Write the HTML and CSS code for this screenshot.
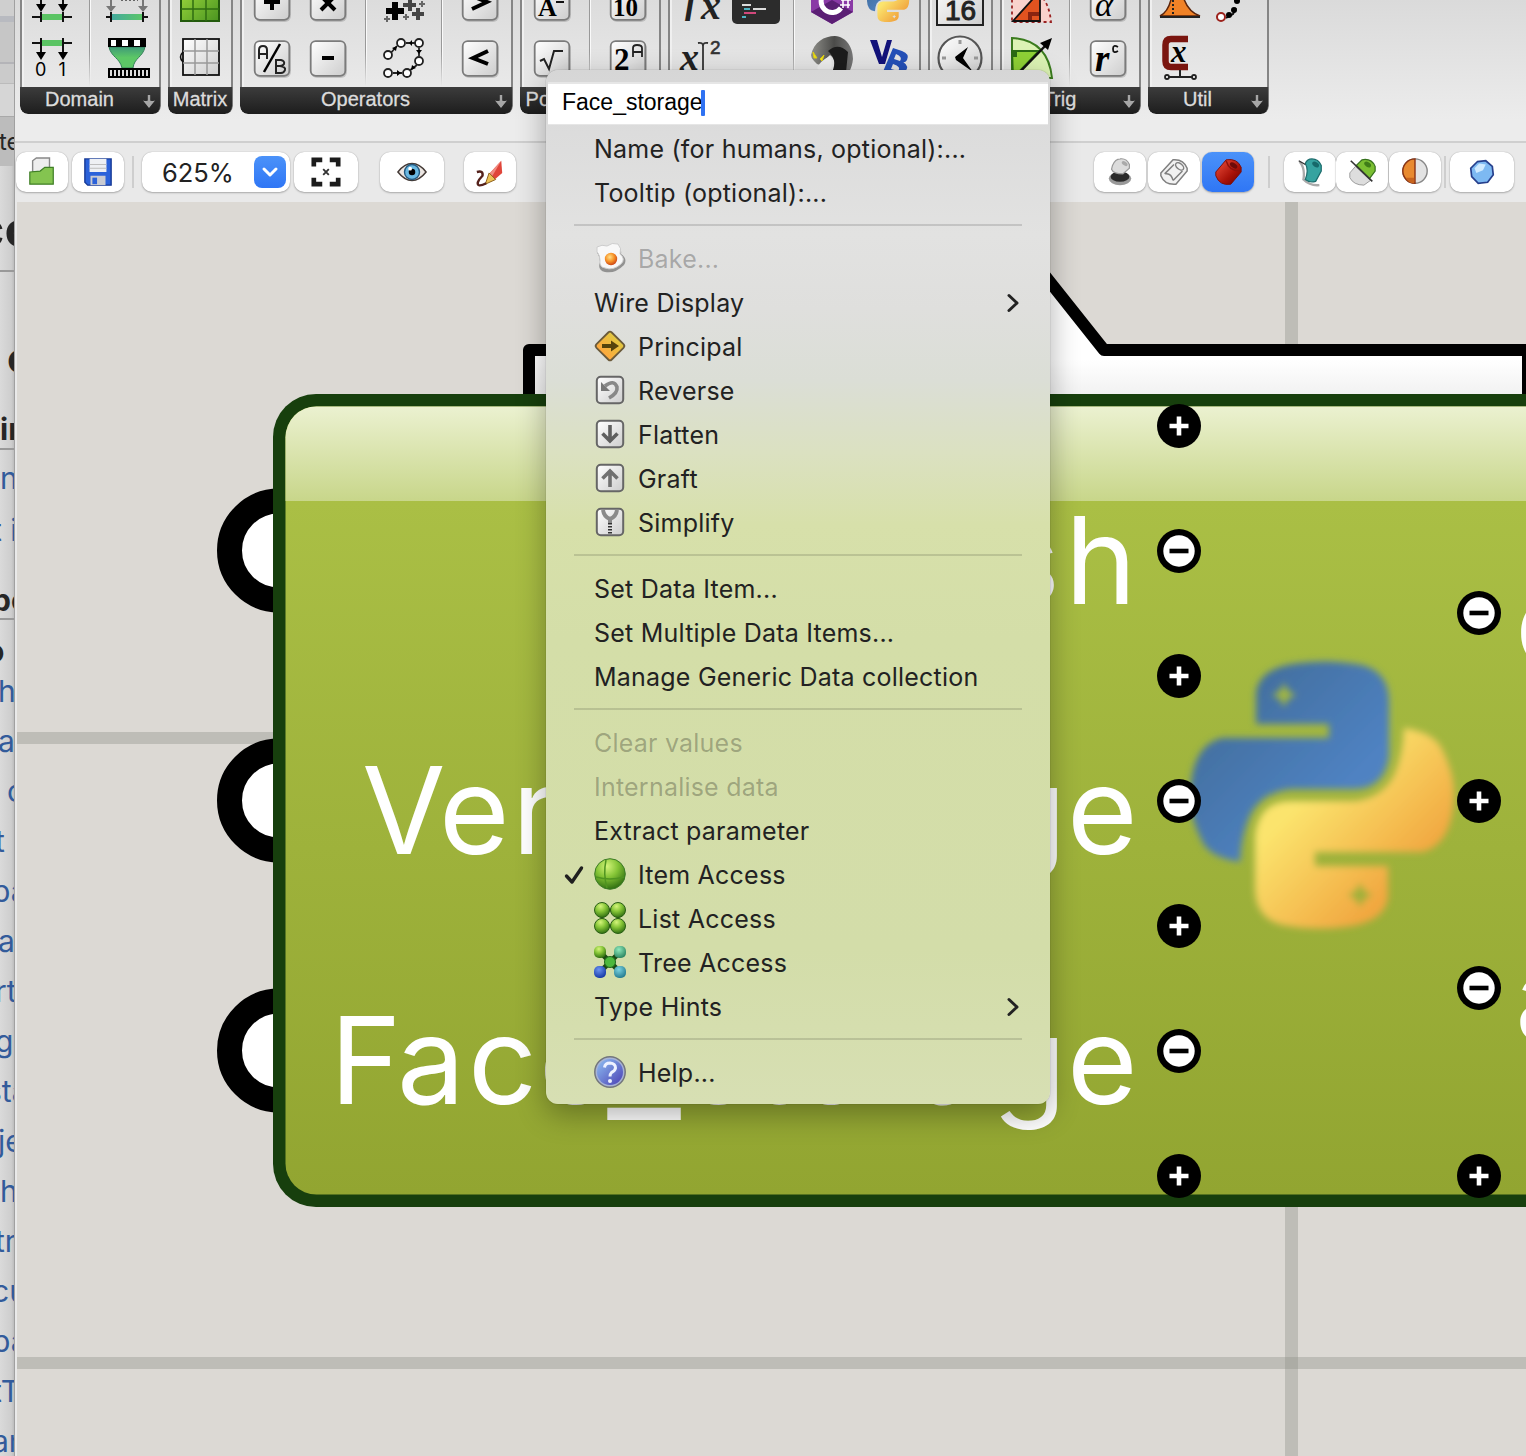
FILE: index.html
```html
<!DOCTYPE html>
<html lang="en">
<head>
<meta charset="utf-8">
<title>Grasshopper</title>
<link rel="stylesheet" href="styles.css">
</head>
<body>
<svg class="defs" width="0" height="0" aria-hidden="true">
  <defs>
    <linearGradient id="keyFill" x1="0" y1="0" x2="1" y2="1"><stop offset="0" stop-color="#fff"/><stop offset="1" stop-color="#cdcdcd"/></linearGradient>
    <linearGradient id="greenGrid" x1="0" y1="0" x2="1" y2="1"><stop offset="0" stop-color="#a5e040"/><stop offset="1" stop-color="#4a9420"/></linearGradient>
    <linearGradient id="tealGreen"><stop offset="0" stop-color="#43a9a0"/><stop offset="1" stop-color="#5cc766"/></linearGradient>
    <linearGradient id="funnel" x1="0" y1="0" x2="0" y2="1"><stop offset="0" stop-color="#3f9a78"/><stop offset=".5" stop-color="#5cc766"/></linearGradient>
    <linearGradient id="pyBlue" x1="0" y1="0" x2="1" y2="1"><stop offset=".2" stop-color="#426f9f"/><stop offset=".7" stop-color="#4f82c2"/></linearGradient>
    <linearGradient id="pyYellow" x1="1" y1="1" x2="0" y2="0"><stop offset=".3" stop-color="#fbe46d"/><stop offset=".75" stop-color="#f1a740"/></linearGradient>
    <radialGradient id="ballGreen" cx=".4" cy=".25" r=".8"><stop offset="0" stop-color="#d4f47a"/><stop offset=".45" stop-color="#84c436"/><stop offset="1" stop-color="#28660e"/></radialGradient>
    <radialGradient id="ballTeal" cx=".4" cy=".3" r=".8"><stop offset="0" stop-color="#8feabb"/><stop offset="1" stop-color="#217a58"/></radialGradient>
    <radialGradient id="ballCyan" cx=".4" cy=".3" r=".8"><stop offset="0" stop-color="#7bd3e0"/><stop offset="1" stop-color="#1c7288"/></radialGradient>
    <radialGradient id="ballBlue" cx=".4" cy=".3" r=".8"><stop offset="0" stop-color="#6b93f0"/><stop offset="1" stop-color="#0c2f9e"/></radialGradient>
    <radialGradient id="yolk" cx=".4" cy=".35" r=".7"><stop offset="0" stop-color="#ffe08a"/><stop offset=".5" stop-color="#f79429"/><stop offset="1" stop-color="#c83c12"/></radialGradient>
    <linearGradient id="sign" x1="0" y1="0" x2="0" y2="1"><stop offset="0" stop-color="#e0c740"/><stop offset="1" stop-color="#ffa73c"/></linearGradient>
    <linearGradient id="help" x1="0" y1="0" x2="1" y2="1"><stop offset="0" stop-color="#8fc0f2"/><stop offset="1" stop-color="#4a3fb4"/></linearGradient>
    <linearGradient id="redCyl" x1="0" y1="0" x2="1" y2="1"><stop offset="0" stop-color="#f0523f"/><stop offset=".6" stop-color="#a91208"/><stop offset="1" stop-color="#600"/></linearGradient>
    <linearGradient id="snake" x1="0" y1="0" x2="1" y2="0"><stop offset="0" stop-color="#8f8f8a"/><stop offset=".55" stop-color="#4b4b49"/><stop offset="1" stop-color="#777"/></linearGradient>
    <g id="key"><rect x="11" y="12" width="36" height="36" rx="6" fill="#000" opacity=".15"/><rect x="10.700" y="11.200" width="34.600" height="34.600" rx="5" fill="url(#keyFill)" stroke="#7b7b7b" stroke-width="1.800"/></g>
    <path id="python" d="M1300 663Q1330 659 1362 665Q1389 672 1389 702V755Q1385 788 1355 789H1290Q1262 792 1250 815Q1241 835 1240 862Q1212 858 1203 843Q1190 818 1190 797Q1191 745 1222 738H1329V724H1256V692Q1260 667 1300 663ZM1284 683L1280 691L1272 695L1280 699L1284 707L1288 699L1296 695L1288 691Z"/>
    <filter id="soften" x="-10%" y="-10%" width="120%" height="120%"><feGaussianBlur stdDeviation="3.600"/></filter>
    <g id="mkey"><rect x="2.800" y="2.800" width="26.400" height="26.400" rx="4" fill="url(#keyFill)" stroke="#666" stroke-width="2"/></g>
    <g id="down"><path d="M8 3V14" stroke="#a6a6a6" stroke-width="2.400"/><path d="M2 8.500Q8 10 8 7Q8 10 14 8.500L8 16Z" fill="#a6a6a6"/></g>
  </defs>
</svg>

<div class="desktop">
  <aside class="page-behind">
    <div class="tab-strip"><span class="tab">te</span></div>
    <div class="row title in-title">co</div>
    <div class="row heading in-8">o</div>
    <div class="row sub in-1">in</div>
    <div class="row link first in-1">n</div>
    <div class="row link second in-l8">t i</div>
    <div class="row sub third in-l7">po</div>
    <div class="row bold in-l11">o</div>
    <div class="row link in-l1">h</div>
    <div class="row link in-l1">a</div>
    <div class="row link in-8">c</div>
    <div class="row link in-l4">t</div>
    <div class="row link in-l7">pa</div>
    <div class="row link in-l1">a</div>
    <div class="row link in-l4">rt</div>
    <div class="row link in-l4">g</div>
    <div class="row link in-l14">sta</div>
    <div class="row link in-l1">je</div>
    <div class="row link in-1">h</div>
    <div class="row link in-l4">tr</div>
    <div class="row link in-l7">cu</div>
    <div class="row link in-l7">pa</div>
    <div class="row link in-l7">tT</div>
    <div class="row link in-l7">an</div>
  </aside>

  <main class="window">
    <header class="ribbon">
      <section class="group">
        <div class="cells">
          <div class="col">
            <svg class="ic" viewBox="0 0 56 56"><g stroke="#111" stroke-width="2"><rect x="17" y="40" width="22" height="6" fill="#5bc464" stroke="none"/><path d="M8 43H17M39 43H48M17 38V48M39 38V48M17 20V30M39 20V30"/></g><path d="M12 30H22L17 38ZM34 30H44L39 38Z"/></svg>
            <svg class="ic" viewBox="0 0 56 56"><g stroke="#111" stroke-width="2"><rect x="17" y="10" width="22" height="6" fill="#5bc464" stroke="none"/><path d="M8 13H17M39 13H48M17 8V24M39 8V24"/></g><path d="M12 22H22L17 30ZM34 22H44L39 30Z"/><text class="mono" x="11" y="46" font-size="18">0</text><text class="mono" x="34.500" y="46" font-size="18">1</text></svg>
          </div>
          <i class="rule"></i>
          <div class="col">
            <svg class="ic" viewBox="0 0 56 56"><rect x="11" y="40" width="32" height="6" fill="url(#tealGreen)"/><path d="M6 43H11M43 43H48M11 38V48M43 38V48" stroke="#111" stroke-width="2"/><path d="M6 32H16L11 38ZM38 32H48L43 38Z" fill="#777"/><path d="M11 20V32M43 20V32" stroke="#777" stroke-width="2"/><path d="M21 26H38" stroke="#666" stroke-width="2" stroke-dasharray="2 2"/></svg>
            <svg class="ic" viewBox="0 0 56 56"><path d="M9 17H45C43 27 34 28 33 38H22C20 28 11 27 9 17Z" fill="url(#funnel)" stroke="#35805a"/><path d="M8 8H46V17H8Z"/><path d="M11 10H16V16H11ZM22 10H28V16H22ZM34 10H40V16H34Z" fill="#fff"/><path d="M8 38H50V48H8Z"/><path d="M10 43H49" stroke="#ddd" stroke-width="6" stroke-dasharray="2 2"/></svg>
          </div>
        </div>
        <div class="bar"><span>Domain</span><svg class="arr" viewBox="0 0 16 18"><use href="#down"/></svg></div>
      </section>

      <section class="group">
        <div class="cells"><div class="col">
          <svg class="ic" viewBox="0 0 56 56"><rect x="9" y="9" width="38" height="38" fill="url(#greenGrid)" stroke="#235a0c" stroke-width="2"/><path d="M21 9V47M34 9V47M9 22H47M9 35H47" stroke="#2f6d12" stroke-width="1.500"/></svg>
          <svg class="ic" viewBox="0 0 56 56"><rect x="11" y="9" width="36" height="36" fill="url(#keyFill)" stroke="#111" stroke-width="1.800"/><path d="M23 9V45M35 9V45M11 21H47M11 33H47" stroke="#999" stroke-width="1.500"/><path d="M11 22Q6 27 11 32" fill="none" stroke="#111" stroke-width="1.500"/></svg>
        </div></div>
        <div class="bar plain"><span>Matrix</span></div>
      </section>

      <section class="group">
        <div class="cells">
          <div class="col">
            <svg class="ic" viewBox="0 0 56 56"><use href="#key"/><path d="M20 28H36M28 20V36" stroke="#000" stroke-width="4"/></svg>
            <svg class="ic" viewBox="0 0 56 56"><use href="#key"/><path d="M15 29V20Q15 16 19 16Q23 16 23 20V29M15 24H23M32 43V30H37Q41 31 40 34Q39 36 36 36Q42 37 41 40Q40 43 37 43ZM32 36H37" fill="none" stroke="#222" stroke-width="2"/><path d="M20 42L36 14" stroke="#000" stroke-width="2.500"/></svg>
          </div>
          <div class="col">
            <svg class="ic" viewBox="0 0 56 56"><use href="#key"/><path d="M21 22L35 36M35 22L21 36" stroke="#000" stroke-width="4"/></svg>
            <svg class="ic" viewBox="0 0 56 56"><use href="#key"/><path d="M22 28H34" stroke="#000" stroke-width="4"/></svg>
          </div>
          <i class="rule"></i>
          <div class="col">
            <svg class="ic" viewBox="0 0 56 56"><path d="M10 37H28M19 28V46" stroke="#000" stroke-width="6"/><path d="M27 31H40M34 24V37M36 40H48M42 34V46" stroke="#444" stroke-width="4"/><path d="M8 45H14M11 42V48M27 43H33M30 40V46M43 30H49M46 27V33" stroke="#666" stroke-width="2"/></svg>
            <svg class="ic" viewBox="0 0 56 56"><g fill="none" stroke="#222" stroke-width="1.800"><path d="M13 25L21 16M30 13H39M43 18V26M41 35L33 41M17 43H26"/><g fill="#fff"><circle cx="12" cy="25" r="4"/><circle cx="25" cy="13" r="4"/><circle cx="43" cy="13" r="4"/><circle cx="43" cy="31" r="4"/><circle cx="31" cy="43" r="4"/><circle cx="12" cy="43" r="4"/></g></g><path d="M16 18L21 16L20 21ZM33 13L36 10V16ZM43 24L40 20H46ZM35 40L36 35L40 38ZM25 43L21 40V46Z"/></svg>
          </div>
          <i class="rule"></i>
          <div class="col">
            <svg class="ic" viewBox="0 0 56 56"><use href="#key"/><path d="M20 22L35 28L20 35" fill="none" stroke="#000" stroke-width="4"/></svg>
            <svg class="ic" viewBox="0 0 56 56"><use href="#key"/><path d="M36 21L21 28L36 34" fill="none" stroke="#000" stroke-width="4"/></svg>
          </div>
        </div>
        <div class="bar"><span>Operators</span><svg class="arr" viewBox="0 0 16 18"><use href="#down"/></svg></div>
      </section>

      <section class="group">
        <div class="cells">
          <div class="col">
            <svg class="ic" viewBox="0 0 56 56"><use href="#key"/><text class="serif b" x="14" y="42" font-size="26">A</text><path d="M32 28H40" stroke="#111" stroke-width="2"/></svg>
            <svg class="ic" viewBox="0 0 56 56"><use href="#key"/><path d="M16 31L20 29L25 39L30 21H39" fill="none" stroke="#222" stroke-width="2"/></svg>
          </div>
          <i class="rule"></i>
          <div class="col">
            <svg class="ic" viewBox="0 0 56 56"><use href="#key"/><text class="serif b" x="13" y="42" font-size="25">10</text></svg>
            <svg class="ic" viewBox="0 0 56 56"><use href="#key"/><text class="serif b" x="14" y="40" font-size="31">2</text><path d="M33 27V18Q33 15 37 15Q42 15 42 18V27M33 22H42" fill="none" stroke="#222" stroke-width="1.800"/></svg>
          </div>
        </div>
        <div class="bar"><span>Polynomials</span><svg class="arr" viewBox="0 0 16 18"><use href="#down"/></svg></div>
      </section>

      <section class="group">
        <div class="cells">
          <div class="col">
            <svg class="ic" viewBox="0 0 56 56"><text class="serif i b" x="13" y="39" font-size="36" fill="#222">f</text><text class="serif i b" x="29" y="45" font-size="40" fill="#222">x</text></svg>
            <svg class="ic" viewBox="0 0 56 56"><text class="serif i b" x="8" y="40" font-size="38" fill="#222">x</text><text class="sans" x="38" y="24" font-size="19" fill="#333" stroke="#333" stroke-width=".6">2</text><path d="M26 13Q31 12 31 16Q31 12 36 13M31 15V44" fill="none" stroke="#333" stroke-width="1.800"/></svg>
          </div>
          <div class="col">
            <svg class="ic" viewBox="0 0 56 56"><rect x="4" y="4" width="48" height="46" rx="5" fill="#2c2c2c"/><path d="M14 31H23M25 35H38" stroke="#ddd" stroke-width="2"/><path d="M16 35H22M14 43H18" stroke="#4fb4c4" stroke-width="2"/><path d="M16 39H28" stroke="#d2487c" stroke-width="2"/></svg>
            <svg class="ic" viewBox="0 0 56 56"></svg>
          </div>
          <i class="rule"></i>
          <div class="col">
            <svg class="ic" viewBox="0 0 56 56"><path d="M28 2L49 14V38L28 50L7 38V14Z" fill="#8a3aa6"/><path d="M28 26L49 38L28 50L7 38Z" fill="#5b1f74"/><path d="M37 34A11 11 0 1 1 37 21" fill="none" stroke="#fff" stroke-width="5"/><path d="M39 22V34M44 22V34M37 26H47M36 31H46" stroke="#fff" stroke-width="1.600"/></svg>
            <svg class="ic" viewBox="0 0 56 56"><path d="M7 25C10 12 20 6 31 6C43 7 49 18 49 29C48 39 44 44 42 46L26 44C34 39 32 29 26 25C22 29 19 31 16 35Q12 34 10 31Q7 28 7 25Z" fill="url(#snake)"/><path d="M24 21Q34 12 44 22L42 42H28Q34 30 24 21Z" fill="#1c1c1c"/><path d="M13 38Q16 31 26 26Q30 35 25 42H16Z" fill="#eee"/><path d="M9 22L13 28H10ZM16 29L20 25L18 31Z" fill="#f3e51c" stroke="#e0d010"/></svg>
          </div>
          <div class="col">
            <svg class="ic" viewBox="0 0 56 56"><g transform="translate(7 5) scale(.16) translate(-1190 -660)"><use href="#python" fill="url(#pyBlue)"/><use href="#python" fill="url(#pyYellow)" transform="rotate(180 1322 795)"/></g></svg>
            <svg class="ic" viewBox="0 0 56 56"><path d="M10 10H17L22 27L27 10H32L25 34H19Z" fill="#12127a"/><path d="M33 18L42 21Q50 24 47 30Q45 33 43 32Q50 36 45 42Q40 48 22 44ZM36 24L34 29L40 31Q43 27 36 24ZM33 34L31 39L38 41Q42 37 33 34Z" fill="#2450b8" fill-rule="evenodd"/></svg>
          </div>
        </div>
        <div class="bar"><span>Script</span><svg class="arr" viewBox="0 0 16 18"><use href="#down"/></svg></div>
      </section>

      <section class="group">
        <div class="cells"><div class="col">
          <svg class="ic" viewBox="0 0 56 56"><rect x="5" y="6" width="46" height="45" fill="url(#keyFill)" stroke="#222" stroke-width="2"/><text class="sans" x="13" y="46" font-size="28" fill="#222" stroke="#222">16</text></svg>
          <svg class="ic" viewBox="0 0 56 56"><circle cx="28" cy="28" r="21.500" fill="url(#keyFill)" stroke="#555" stroke-width="2.200"/><path d="M28 10V14M10 28H14M42 28H46" stroke="#999" stroke-width="3"/><path d="M36 17L31 28L41 42L24 30L23 27Z"/></svg>
        </div></div>
        <div class="bar plain"><span>Time</span></div>
      </section>

      <section class="group">
        <div class="cells">
          <div class="col">
            <svg class="ic" viewBox="0 0 56 56"><path d="M8 8Q44 12 47 48H8Z" fill="#f9d2cc" stroke="#922" stroke-width="1.800" stroke-dasharray="3 3"/><path d="M9 47L36 17V47Z" fill="#e2531f" stroke="#111" stroke-width="1.800"/><path d="M26 46V40H35" fill="none" stroke="#8a2410" stroke-width="4"/></svg>
            <svg class="ic" viewBox="0 0 56 56"><path d="M8 8Q44 10 48 48H8Z" fill="#dcf3b4" stroke="#3b7c1e" stroke-width="2"/><path d="M8 21H35L9 48Z" fill="#8fd136" stroke="#2b6a14" stroke-width="2"/><path d="M8 21H13V27H8Z" fill="#2b6a14"/><path d="M12 46L43 14" stroke="#111" stroke-width="2.500"/><path d="M48 8L36 13L44 20Z"/></svg>
          </div>
          <i class="rule"></i>
          <div class="col">
            <svg class="ic" viewBox="0 0 56 56"><use href="#key"/><text class="serif i" x="15" y="42" font-size="34">α</text></svg>
            <svg class="ic" viewBox="0 0 56 56"><use href="#key"/><text class="serif i b" x="15" y="41" font-size="37">r</text><path d="M38 17Q33 14 33 19Q33 24 38 21" fill="none" stroke="#111" stroke-width="1.800"/></svg>
          </div>
        </div>
        <div class="bar"><span>Trig</span><svg class="arr" viewBox="0 0 16 18"><use href="#down"/></svg></div>
      </section>

      <section class="group">
        <div class="cells">
          <div class="col">
            <svg class="ic" viewBox="0 0 56 56"><path d="M8 42Q20 36 21 10H29Q31 36 48 42Z" fill="#f08227" stroke="#5b250c" stroke-width="1.500"/><path d="M21 18V42" stroke="#222" stroke-width="2" stroke-dasharray="2 2"/><path d="M8 43H48" stroke="#222" stroke-width="2"/></svg>
            <svg class="ic" viewBox="0 0 56 56"><path d="M36 9H19Q13.500 9 13.500 15V31Q13.500 37 19 37H36" fill="none" stroke="#7a150f" stroke-width="6.500"/><text class="serif i b" x="19" y="32" font-size="31">x</text><path d="M28 40V47M16 47H42" stroke="#222" stroke-width="2"/><g fill="#fff" stroke="#222" stroke-width="1.800"><circle cx="15" cy="47" r="2"/><circle cx="42" cy="47" r="2"/></g></svg>
          </div>
          <div class="col">
            <svg class="ic" viewBox="0 0 56 56"><path d="M31 18L29 27M28 34L25 40L18 44" fill="none" stroke="#111" stroke-width="2"/><circle cx="29" cy="27" r="3"/><circle cx="26" cy="36" r="3"/><circle cx="21" cy="41" r="3"/><circle cx="13" cy="43" r="4" fill="#fff" stroke="#9c221c" stroke-width="2"/></svg>
            <svg class="ic" viewBox="0 0 56 56"></svg>
          </div>
        </div>
        <div class="bar"><span>Util</span><svg class="arr" viewBox="0 0 16 18"><use href="#down"/></svg></div>
      </section>
    </header>

    <nav class="toolbar">
      <button class="tb"><svg viewBox="0 0 32 32"><path d="M6 14V4L10 1H24V16H6Z" fill="#eee" stroke="#888" stroke-width="1.500"/><path d="M3 16L14 15L19 11H28V29H3Z" fill="#84c450" stroke="#3f7f26" stroke-width="1.300"/></svg></button>
      <button class="tb"><svg viewBox="0 0 32 32"><path d="M2 2H30V30H5L2 27Z" fill="#2b62da" stroke="#173a96" stroke-width="1.500"/><path d="M7 2H25V16H7Z" fill="#eef0f4"/><path d="M7 8H25M7 12H25" stroke="#bbb"/><path d="M8 20H24V30H8Z" fill="#c9cbd2"/><path d="M10 22H15V29H10Z" fill="#2b62da"/></svg></button>
      <i class="sep s1"></i>
      <div class="combo"><span>625%</span><b><svg viewBox="0 0 32 32"><path d="M10 13L16 19L22 13" fill="none" stroke="#fff" stroke-width="3" stroke-linecap="round" stroke-linejoin="round"/></svg></b></div>
      <button class="tb wide"><svg viewBox="0 0 32 32"><g fill="none" stroke="#1c1c1c" stroke-width="5"><path d="M3 10V3H12M20 3H29V10M29 22V29H20M12 29H3V22"/></g><path d="M13 13L19 19M19 13L13 19" stroke="#333" stroke-width="2"/></svg></button>
      <button class="tb wide eye"><svg viewBox="0 0 32 32"><path d="M1 16Q8 7 16 7Q24 7 31 16Q24 25 16 25Q8 25 1 16Z" fill="#ece6e2" stroke="#443a36" stroke-width="1.600"/><circle cx="16" cy="16" r="8" fill="#69b8e2" stroke="#255a80" stroke-width="1.500"/><circle cx="16" cy="16" r="3.500"/><circle cx="14" cy="12.500" r="2" fill="#fff"/></svg></button>
      <button class="tb pen"><svg viewBox="0 0 32 32"><path d="M28 4L29 17L21 24L15 18Z" fill="#e0453a"/><path d="M28 4L15 18L18 21Z" fill="#f08a80"/><path d="M15 17L22 24L11 29Z" fill="#ecc257" stroke="#8a5a14"/><path d="M12 28Q2 33 3 27Q4 24 8 20Q9 14 2 16" fill="none" stroke="#55221c" stroke-width="2.600"/></svg></button>
      <div class="tb-right">
        <button class="tb"><svg viewBox="0 0 32 32"><ellipse cx="16" cy="23" rx="12" ry="7" fill="#999"/><ellipse cx="16" cy="21" rx="10" ry="5.500" fill="#2b2b2b"/><path d="M8 9Q11 2 16 2Q23 1 26 8V12L19 18Q9 18 7 13Z" fill="#dcdcdc" stroke="#999" stroke-width="1.300"/><ellipse cx="21" cy="7" rx="3.500" ry="2" fill="#aaa" transform="rotate(35 21 7)"/></svg></button>
        <button class="tb"><svg viewBox="0 0 32 32"><g fill="none" stroke="#808080" stroke-width="1.600"><path d="M2 17L15 3Q26 2 30 12V15L18 29Q6 30 2 20Z" fill="#f2f2f2"/><ellipse cx="22" cy="10" rx="5" ry="3" transform="rotate(40 22 10)"/><path d="M6 18L16 8M15 25L25 15M7 18Q13 17 15 25"/></g></svg></button>
        <button class="tb on"><svg viewBox="0 0 32 32"><path d="M3 16L14 3Q26 1 30 11V16L19 29Q7 31 3 20Z" fill="url(#redCyl)" stroke="#7a0c08"/><path d="M14 4Q17 15 29 15" fill="none" stroke="#8d120b" stroke-width="1.500"/><ellipse cx="22" cy="9" rx="4.500" ry="2.500" fill="#6d0b08" transform="rotate(35 22 9)"/></svg></button>
        <i class="sep s2"></i>
        <button class="tb"><svg viewBox="0 0 32 32"><path d="M5 5Q11 12 9 24Q16 31 26 30" fill="none" stroke="#aaa" stroke-width="2.500"/><path d="M11 7Q13 2 18 2Q25 2 28 9V15L22 26Q16 28 11 24Q15 14 11 7Z" fill="#36a3a0" stroke="#1c6c6c" stroke-width="1.300"/><path d="M4 4L11 8" stroke="#333" stroke-width="1.500"/><ellipse cx="22" cy="8" rx="4" ry="2.500" fill="#17696a" transform="rotate(35 22 8)"/></svg></button>
        <button class="tb"><svg viewBox="0 0 32 32"><path d="M3 17L9 10L25 25L18 30Q7 30 3 22Z" fill="#ddd" stroke="#999"/><path d="M10 9L16 3Q26 1 30 10V15L24 23Z" fill="#7bbf32" stroke="#35701c" stroke-width="1.300"/><path d="M4 4L27 26" stroke="#333" stroke-width="1.700"/><ellipse cx="22" cy="8" rx="4" ry="2.500" fill="#3f7d18" transform="rotate(35 22 8)"/></svg></button>
        <button class="tb"><svg viewBox="0 0 32 32"><circle cx="16" cy="15" r="13" fill="#e3e3e3" stroke="#888" stroke-width="1.500"/><path d="M16 2A13 13 0 0 0 16 28Z" fill="#e88a30" stroke="#8b3414" stroke-width="1.500"/><path d="M6 22Q9 28 15 28V22Z" fill="#c8641e"/></svg></button>
        <i class="sep s3"></i>
        <button class="tb wide"><svg viewBox="0 0 32 32"><path d="M11 5L20 4L27 10L28 19L22 27L12 28L5 21L4 12Z" fill="#7db9f2" stroke="#263f8c" stroke-width="1.800"/><path d="M8 12L13 7L20 8L17 14L10 17Z" fill="#cfeaff"/></svg></button>
      </div>
    </nav>

    <svg class="canvas" viewBox="17 202 1509 1254">
      <defs>
        <linearGradient id="body" gradientUnits="userSpaceOnUse" x1="0" y1="501" x2="0" y2="1195"><stop offset="0" stop-color="#aabf45"/><stop offset="1" stop-color="#92a531"/></linearGradient>
        <linearGradient id="gloss" gradientUnits="userSpaceOnUse" x1="0" y1="407" x2="0" y2="501"><stop offset="0" stop-color="#ebf1d0"/><stop offset="1" stop-color="#c8d68a"/></linearGradient>
        <linearGradient id="tag" gradientUnits="userSpaceOnUse" x1="0" y1="280" x2="0" y2="394"><stop offset="0" stop-color="#fff"/><stop offset=".7" stop-color="#fff"/><stop offset="1" stop-color="#f2f2f2"/></linearGradient>
        <clipPath id="inner"><rect x="285.500" y="406.500" width="1400" height="788" rx="31"/></clipPath>
        <g id="plus"><circle r="22"/><path d="M-9.500 0H9.500M0 -9.500V9.500" stroke="#fff" stroke-width="4.600"/></g>
        <g id="minus"><circle r="22"/><circle r="15.700" fill="#fff"/><path d="M-9.500 0H9.500" stroke="#000" stroke-width="4.600"/></g>
      </defs>
      <g fill="#8f9088" fill-opacity=".38"><path d="M1285 202H1298V1456H1285Z"/><path d="M17 732H1526V744H17Z"/><path d="M17 1357H1526V1369H17Z"/></g>
      <path d="M529 440V350H780V160H953L1104 350H1528V440Z" fill="url(#tag)" stroke="#000" stroke-width="12" stroke-linejoin="round"/>
      <g fill="#fff" stroke="#000" stroke-width="25"><circle cx="279" cy="550.500" r="49.500"/><circle cx="279" cy="800.500" r="49.500"/><circle cx="279" cy="1050.500" r="49.500"/></g>
      <rect x="273" y="394" width="1400" height="813" rx="43" fill="#173f0d"/>
      <g clip-path="url(#inner)"><path d="M280 400H1526V1200H280Z" fill="url(#body)"/><path d="M280 400H1526V501H280Z" fill="url(#gloss)"/></g>
      <g class="port">
        <text y="604" x="810 928 996 1065">Mesh</text>
        <text y="854" x="362 439 512 560 607 687 750 795 870 915 992 1067">Vert_storage</text>
        <text y="1104" x="330 397 468 539">Face<tspan x="607" dy="4" class="under">_</tspan><tspan dy="-4" x="687 750 795 870 915 992 1067">storage</tspan></text>
        <text x="1515" y="666">out</text>
        <text x="1515" y="1041">a</text>
      </g>
      <g filter="url(#soften)"><use href="#python" fill="url(#pyBlue)" fill-rule="evenodd"/><use href="#python" fill="url(#pyYellow)" fill-rule="evenodd" transform="rotate(180 1322 795)"/></g>
      <use href="#plus" x="1179" y="426"/><use href="#minus" x="1179" y="551"/><use href="#plus" x="1179" y="676"/><use href="#minus" x="1179" y="801"/><use href="#plus" x="1179" y="926"/><use href="#minus" x="1179" y="1051"/><use href="#plus" x="1179" y="1176"/>
      <use href="#minus" x="1479" y="613"/><use href="#plus" x="1479" y="801"/><use href="#minus" x="1479" y="988"/><use href="#plus" x="1479" y="1176"/>
    </svg>
  </main>
</div>

<div class="menu">
  <div class="field"><span>Face_storage</span><i class="caret"></i></div>
  <div class="item">Name (for humans, optional):...</div>
  <div class="item">Tooltip (optional):...</div>
  <hr>
  <div class="item off"><svg viewBox="0 0 32 32"><path d="M4 6Q8 3 13 5Q18 1 24 3Q28 7 27 12Q34 17 30 23Q21 32 11 30Q3 28 6 20Q6 14 3 11Z" fill="#777" opacity=".75"/><path d="M3 5Q8 2 13 4Q18 0 24 2Q28 6 26 12Q32 17 27 22Q19 29 11 26Q5 25 6 18Q6 13 3 10Z" fill="#f8f8f8" stroke="#ccc"/><circle cx="17" cy="17" r="6.200" fill="url(#yolk)"/></svg>Bake...</div>
  <div class="item">Wire Display<svg class="more" viewBox="0 0 14 20"><path d="M3 2.500L11 10L3 17.500"/></svg></div>
  <div class="item"><svg viewBox="0 0 32 32"><rect x="5.200" y="5.200" width="21.600" height="21.600" rx="2.500" transform="rotate(45 16 16)" fill="url(#sign)" stroke="#6b5a3a" stroke-width="1.800"/><path d="M8 14H17V10.500L25 16L17 21.500V18H8Z" fill="#54430c"/></svg>Principal</div>
  <div class="item"><svg viewBox="0 0 32 32"><use href="#mkey"/><path d="M11 12Q20 5 23 13Q24 19 15 24" fill="none" stroke="#888" stroke-width="3.600"/><path d="M7 8V17H16Z" fill="#777"/></svg>Reverse</div>
  <div class="item"><svg viewBox="0 0 32 32"><use href="#mkey"/><path d="M16 7V22M8.500 15.500L16 23L23.500 15.500" fill="none" stroke="#5e5e5e" stroke-width="3.600"/></svg>Flatten</div>
  <div class="item"><svg viewBox="0 0 32 32"><use href="#mkey"/><path d="M16 25V9M8.500 16.500L16 9L23.500 16.500" fill="none" stroke="#707070" stroke-width="3.600"/></svg>Graft</div>
  <div class="item"><svg viewBox="0 0 32 32"><use href="#mkey"/><path d="M9 4Q10 11 16 13Q22 11 23 4M16 12V17" fill="none" stroke="#8a8a8a" stroke-width="4"/><path d="M16 17V29" stroke="#333" stroke-width="4" stroke-dasharray="1.500 1.500"/></svg>Simplify</div>
  <hr>
  <div class="item">Set Data Item...</div>
  <div class="item">Set Multiple Data Items...</div>
  <div class="item">Manage Generic Data collection</div>
  <hr>
  <div class="item off">Clear values</div>
  <div class="item off">Internalise data</div>
  <div class="item">Extract parameter</div>
  <div class="item checked"><svg class="check" viewBox="0 0 22 20"><path d="M3.500 11L9 17L18.500 3"/></svg><svg viewBox="0 0 32 32"><circle cx="16" cy="16" r="15.300" fill="url(#ballGreen)" stroke="#3b7a26"/><path d="M12 2Q9 16 13 30M2 19Q16 23 30 19" fill="none" stroke="#4f9420" stroke-width="1.500"/></svg>Item Access</div>
  <div class="item"><svg viewBox="0 0 32 32"><path d="M8 8H24V24H8Z" fill="none" stroke="#1f4d0c" stroke-width="3"/><g fill="url(#ballGreen)" stroke="#2a5f16"><circle cx="8" cy="8" r="7.500"/><circle cx="24" cy="8" r="7.500"/><circle cx="8" cy="24" r="7.500"/><circle cx="24" cy="24" r="7.500"/></g></svg>List Access</div>
  <div class="item"><svg viewBox="0 0 32 32"><path d="M6 6L26 26M26 6L6 26" stroke="#1c4a12" stroke-width="5"/><rect width="12" height="12" rx="5" fill="url(#ballGreen)"/><rect x="20" width="12" height="12" rx="5" fill="url(#ballTeal)"/><rect y="20" width="12" height="12" rx="5" fill="url(#ballBlue)"/><rect x="20" y="20" width="12" height="12" rx="5" fill="url(#ballCyan)"/><circle cx="16" cy="16" r="5.500" fill="#4db83c" stroke="#1f6a1c"/></svg>Tree Access</div>
  <div class="item">Type Hints<svg class="more" viewBox="0 0 14 20"><path d="M3 2.500L11 10L3 17.500"/></svg></div>
  <hr>
  <div class="item"><svg viewBox="0 0 32 32"><circle cx="16" cy="16" r="15.200" fill="#a7b3d6" stroke="#73767c" stroke-width="1.500"/><circle cx="16" cy="16" r="13" fill="url(#help)"/><path d="M10.500 11.500Q11 7 16 7Q21.500 7.500 21.500 12Q21 15 17.500 16.500Q16 18 16 20.500" fill="none" stroke="#eef2ff" stroke-width="3"/><circle cx="16" cy="25" r="2" fill="#eef2ff"/></svg>Help...</div>
</div>
</body>
</html>
```
FILE: styles.css
```css
* { box-sizing: border-box; }
body {
  margin: 0;
  width: 1526px;
  height: 1456px;
  overflow: hidden;
  position: relative;
  font-family: Inter, "Liberation Sans", sans-serif;
}
.defs { position: absolute; }
.desktop { display: flex; height: 1456px; }

/* Browser page peeking out from behind the window */
.page-behind {
  width: 14px;
  flex: none;
  overflow: hidden;
  white-space: nowrap;
  color: #262626;
  font-size: 30px;
  background: linear-gradient(90deg, #dadada, #cecece 80%, #bdbdbd);
}
.tab-strip {
  height: 166px;
  padding-top: 117px;
  font-size: 24px;
  background: linear-gradient(#cfcfcf 0 16px, #b8bac0 16px 22px, #c6c6c6 22px 62px, #b4b4b8 62px 64px, #cbcbcb 64px 83px, #bbb 83px 84px, #d6d6d6 84px 116px, #a9a9a9 116px 117px, #bcbcbc 117px);
}
.tab { display: block; line-height: 50px; margin-left: -1px; }
.row { height: 50px; line-height: 50px; }
.title { height: 106px; line-height: 126px; font-size: 50px; font-weight: 700; border-bottom: 2px solid #999; }
.heading { height: 132px; line-height: 172px; font-size: 42px; font-weight: 700; }
.sub { height: 46px; line-height: 50px; font-weight: 700; border-bottom: 2px solid #999; }
.link { color: #325b9b; }
.first { height: 53px; line-height: 56px; }
.second { height: 67px; line-height: 54px; }
.third { height: 50px; line-height: 60px; }
.bold { height: 46px; line-height: 62px; font-weight: 700; }
.in-8 { text-indent: 7px; }
.in-1 { text-indent: 0; }
.in-l1 { text-indent: -2px; }
.in-l4 { text-indent: -5px; }
.in-l7 { text-indent: -8px; }
.in-l8 { text-indent: -8px; }
.in-l11 { text-indent: -14px; }
.in-l14 { text-indent: -14px; }
.in-title { text-indent: -25px; }

.window {
  flex: 1;
  display: flex;
  flex-direction: column;
  min-width: 0;
  background: #e9e9e9;
  border-left: 1px solid #a0a0a0;
}

/* Component ribbon */
.ribbon {
  height: 143px;
  padding-left: 5px;
  display: flex;
  gap: 7px;
  align-items: flex-start;
  border-bottom: 2px solid #cfcfcf;
  background: linear-gradient(#dadada, #ececec 85%);
  overflow: hidden;
}
.group {
  height: 114px;
  flex: none;
  border-radius: 0 0 8px 8px;
  overflow: hidden;
}
.cells {
  height: 87px;
  padding: 0 3px 1px 2px;
  border: 2px solid #858585;
  border-width: 0 2px;
  display: flex;
  align-items: flex-end;
  background: linear-gradient(#dcdcdc, #e9e9e9);
  box-shadow: inset 2px 0 0 #f0f0f0;
}
.col { display: flex; flex-direction: column; width: 56px; }
.ic { display: block; width: 56px; height: 56px; overflow: visible; }
.rule { width: 2px; height: 86px; margin: 0 9px; background: linear-gradient(90deg, #999 50%, #fafafa 50%); -webkit-mask: linear-gradient(#000 60%, transparent); mask: linear-gradient(#000 60%, transparent); }
.bar {
  height: 27px;
  padding: 0 3px 3px 0;
  display: flex;
  align-items: center;
  border-right: 1px solid #777;
  border-radius: 0 0 8px 8px;
  color: #dcdcdc;
  font: 20px/24px "Liberation Sans", Arial, sans-serif;
  background: linear-gradient(#3c3c3c, #1d1d1d);
}
.bar span { flex: 1; width: 0; text-align: center; white-space: nowrap; -webkit-text-stroke: .3px #dcdcdc; }
.bar.plain { padding-right: 0; }
.arr { width: 16px; height: 18px; margin: 4px 0 0 2px; }

.serif { font-family: "Liberation Serif", "Times New Roman", serif; }
.sans { font-family: "Liberation Sans", Arial, sans-serif; }
.mono { font-family: Inter, sans-serif; }
.b { font-weight: 700; }
.i { font-style: italic; }

/* Canvas toolbar */
.toolbar {
  height: 59px;
  padding: 9px 12px 0 1px;
  display: flex;
  align-items: flex-start;
  background: #e9e9e9;
}
.tb {
  flex: none;
  width: 52px;
  height: 40px;
  margin: 0 4px 0 0;
  padding: 0;
  border: 0;
  border-radius: 10px;
  background: #fff;
  box-shadow: 0 0 1px rgba(0,0,0,.3), 0 1px 2px rgba(0,0,0,.25);
  display: flex;
  align-items: center;
  justify-content: center;
}
.tb svg { width: 30px; height: 30px; }
.wide { width: 64px; }
.sep { width: 2px; height: 32px; margin-top: 4px; background: #cecece; }
.s1 { margin-left: 4px; margin-right: 8px; }
.combo {
  width: 148px;
  height: 40px;
  margin-right: 4px;
  padding: 4px 4px 4px 20px;
  display: flex;
  align-items: center;
  justify-content: space-between;
  border-radius: 10px;
  background: #fff;
  box-shadow: 0 0 1px rgba(0,0,0,.3), 0 1px 2px rgba(0,0,0,.25);
  font-size: 25.500px;
  color: #222;
}
.combo b { width: 32px; height: 32px; border-radius: 8px; background: linear-gradient(#4b92f9, #2f76f5); }
.combo b svg { display: block; }
.eye { margin-left: 18px; }
.pen { margin-left: 16px; }
.tb-right { margin-left: auto; display: flex; }
.tb-right .tb { margin-right: 2px; }
.tb-right .s2 { margin: 4px 14px 0 12px; }
.tb-right .s3 { margin: 4px 4px 0 2px; }
.tb-right .s2 ~ .tb { margin-right: 1px; }
.tb-right .s2 + .tb { margin-right: 0; }
.tb-right .tb:last-child { margin-right: 0; }
.on { background: linear-gradient(#4b92f9, #2f76f5); }

.canvas { display: block; width: 1509px; height: 1254px; margin-left: 2px; background: #dcd9d4; }
.port { font: 400 121px Inter, sans-serif; fill: #fff; }
.under { font: 400 164px Roboto, sans-serif; }

/* Parameter context menu */
.menu {
  position: absolute;
  left: 546px;
  top: 70px;
  width: 504px;
  height: 1034px;
  padding-top: 12px;
  border-radius: 12px;
  box-shadow: 0 0 1px rgba(0,0,0,.5), 0 10px 30px rgba(0,0,0,.32);
  background: linear-gradient(#d6d6d6, #dcdcdc 6%, #e2e2e1 16%, #dfdfdd 23%, #dbded6 30%, #dbe1c1 37%, #d7e0aa 44%, #d4dea8 55%, #d3dda9 85%, #d7dfb3);
  color: #222;
}
.field {
  height: 43px;
  margin: 0 2px 2px;
  padding-left: 14px;
  display: flex;
  align-items: center;
  border: 2px solid #e6e6e6;
  border-width: 2px 0 1px;
  background: #fff;
  color: #000;
  font: 23px "Liberation Sans", Arial, sans-serif;
}
.field span { margin-top: -3px; }
.caret { width: 4px; height: 26px; margin: -2px 0 0 -2px; border-radius: 1px; background: #2f72f2; }
.item {
  height: 44px;
  padding-left: 48px;
  display: flex;
  align-items: center;
  font-size: 25px;
  letter-spacing: .22px;
  white-space: nowrap;
}
.item svg { width: 32px; height: 32px; margin: -2px 12px 0 0; overflow: visible; }
.item.off { color: rgba(0,0,0,.27); }
.item .more { width: 14px; height: 20px; margin: 0 30px 0 auto; fill: none; stroke: #222; stroke-width: 3; stroke-linecap: round; stroke-linejoin: round; }
.item.checked { padding-left: 17px; }
.item .check { width: 22px; height: 20px; margin: 0 9px 0 0; fill: none; stroke: #1f1f1f; stroke-width: 3.400; stroke-linecap: round; stroke-linejoin: round; }
.menu hr { height: 2px; margin: 9px 28px 11px; border: 0; background: rgba(0,0,0,.13); }
```
